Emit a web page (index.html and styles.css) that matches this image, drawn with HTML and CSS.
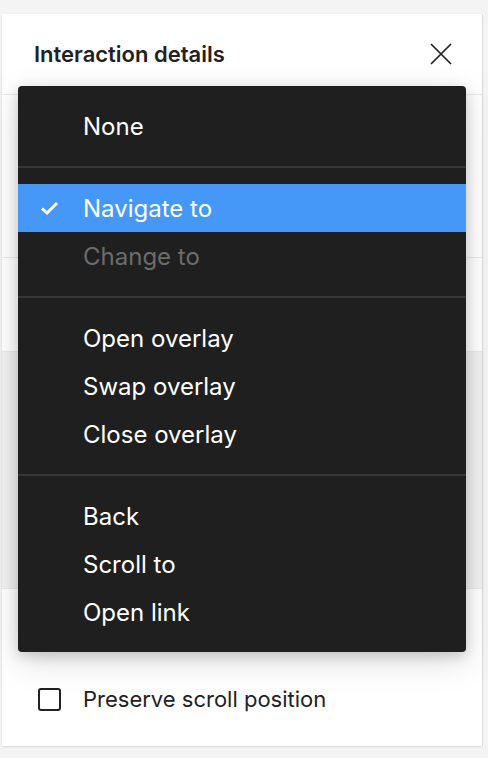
FILE: index.html
```html
<!DOCTYPE html>
<html lang="en">

<head>
    <meta charset="UTF-8">
    <meta name="viewport" content="width=device-width, initial-scale=1.0">
    <title>Interaction details</title>
    <link rel="stylesheet" href="styles.css">
</head>

<body>
    <div class="panel">
        <div class="panel-header">
            <h1>Interaction details</h1>
            <button class="close-button" aria-label="Close">
                <svg width="22" height="22" viewBox="0 0 22 22">
                    <path d="M1 1 L21 21 M21 1 L1 21" stroke="#222" stroke-width="1.7" fill="none" />
                </svg>
            </button>
        </div>
        <div class="panel-section trigger"></div>
        <div class="panel-section action"></div>
        <div class="panel-section destination"></div>
        <div class="panel-section options">
            <label class="option-row">
                <span class="checkbox"></span>
                Preserve scroll position
            </label>
        </div>

        <!-- menu desplegado encima del panel -->
        <ul class="dropdown">
            <li class="item">None</li>
            <li class="divider"></li>
            <li class="item selected">
                <span class="check">
                    <svg width="19" height="14" viewBox="0 0 19 14">
                        <path d="M2 7.5 L7 12 L17 2" stroke="#fff" stroke-width="3" fill="none" />
                    </svg>
                </span>
                Navigate to
            </li>
            <li class="item disabled">Change to</li>
            <li class="divider"></li>
            <li class="item">Open overlay</li>
            <li class="item">Swap overlay</li>
            <li class="item">Close overlay</li>
            <li class="divider"></li>
            <li class="item">Back</li>
            <li class="item">Scroll to</li>
            <li class="item">Open link</li>
        </ul>
    </div>
</body>

</html>
```

FILE: styles.css
```css
body {
    font-family: Inter, "Noto Sans", sans-serif;
    background-color: #f4f4f4;
    color: #222;
    margin: 0;
    padding: 0;
}

.panel {
    position: relative;
    margin: 14px 6px 12px 2px;
    height: 732px;
    background-color: #fff;
    box-shadow: 0 1px 2px rgba(0, 0, 0, 0.12), 1px 0 0 #e2e2e2;
    display: flex;
    flex-direction: column;
}

.panel-header {
    height: 80px;
    display: flex;
    align-items: center;
    justify-content: space-between;
    padding: 0 30px 0 32px;
    border-bottom: 1px solid #e8e8e8;
    flex-shrink: 0;
}

.panel-header h1 {
    margin: 0;
    font-size: 22px;
    font-weight: 600;
    color: #222;
}

.close-button {
    border: none;
    background: none;
    padding: 0;
    width: 22px;
    height: 22px;
    display: flex;
}

.panel-section {
    border-bottom: 1px solid #e8e8e8;
    flex-shrink: 0;
}

.trigger {
    height: 162px;
}

.action {
    height: 93px;
}

.destination {
    height: 236px;
    background-color: #f1f1f1;
}

.options {
    flex: 1;
    border-bottom: none;
    padding-top: 86px;
}

.option-row {
    display: flex;
    align-items: center;
    height: 48px;
    padding-left: 36px;
    font-size: 22px;
    color: #222;
}

.checkbox {
    width: 19px;
    height: 19px;
    border: 2px solid #222;
    border-radius: 3px;
    margin-right: 22px;
}

.dropdown {
    position: absolute;
    top: 72px;
    left: 16px;
    width: 448px;
    margin: 0;
    padding: 16px 0;
    list-style: none;
    background-color: #1f1f1f;
    border-radius: 4px;
    box-shadow: 0 4px 14px rgba(0, 0, 0, 0.18), 0 10px 36px rgba(0, 0, 0, 0.12);
}

.item {
    display: flex;
    align-items: center;
    height: 48px;
    padding-left: 65px;
    font-size: 24px;
    color: #fff;
}

.item.selected {
    background-color: #4598f7;
    padding-left: 22px;
}

.check {
    width: 43px;
    display: flex;
}

.item.disabled {
    color: #6c6c6c;
}

.divider {
    height: 2px;
    margin: 16px 0;
    background-color: #363636;
}
```
